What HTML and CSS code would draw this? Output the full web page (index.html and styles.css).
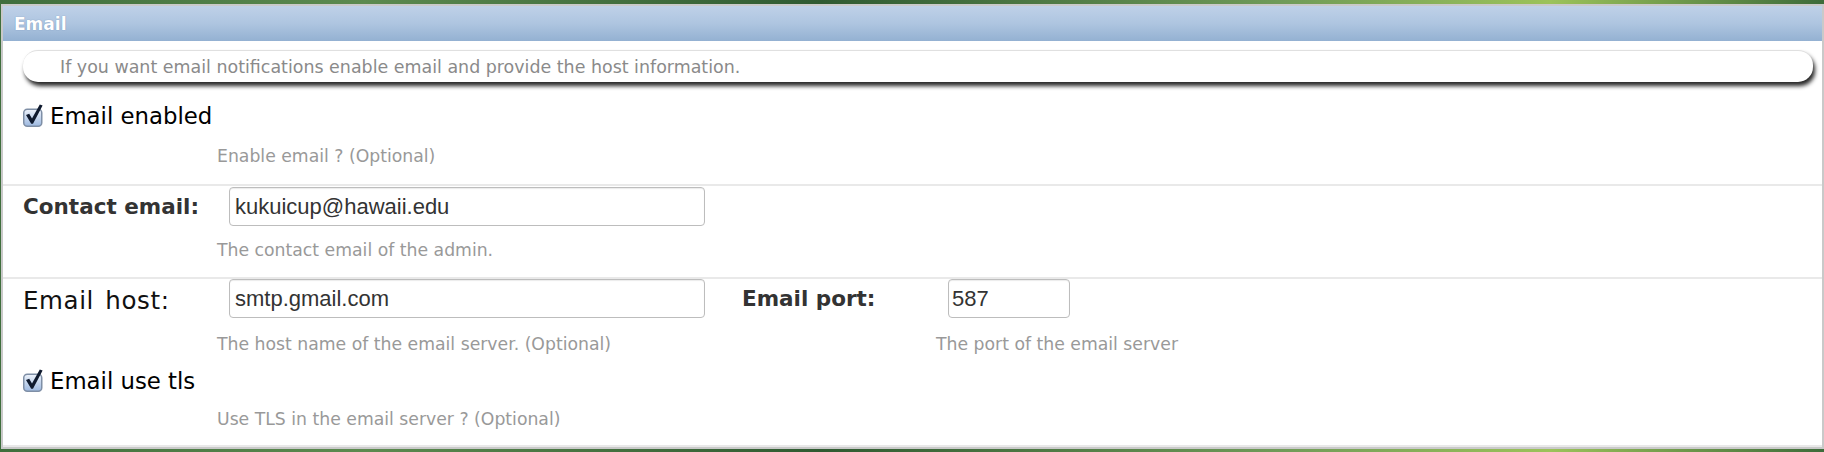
FILE: index.html
```html
<!DOCTYPE html>
<html>
<head>
<meta charset="utf-8">
<title>Email settings</title>
<link rel="stylesheet" href="styles.css">
</head>
<body>
<div class="module">
  <h2 class="module-title">Email</h2>
  <div class="description">If you want email notifications enable email and provide the host information.</div>

  <div class="form-row row-enabled">
    <div class="check-line">
      <svg class="checkbox" viewBox="0 0 20 23" width="20" height="23">
        <defs><linearGradient id="cbg1" x1="0" y1="0" x2="0" y2="1"><stop offset="0" stop-color="#eef3fb"/><stop offset="1" stop-color="#9cb8e0"/></linearGradient></defs>
        <rect x="0.75" y="5.25" width="18" height="17" rx="3.5" fill="url(#cbg1)" stroke="#7f8fa6" stroke-width="1.5"/>
        <path d="M3 11 L6.2 9.8 L9 14.6 L16.8 0.6 L19.6 1.6 L10 19.8 L8.2 19.8 Z" fill="#0f1a2e"/>
      </svg>
      <label class="check-label">Email enabled</label>
    </div>
    <p class="help">Enable email ? (Optional)</p>
  </div>

  <div class="form-row row-contact">
    <div class="field-line">
      <label class="field-label bold">Contact email:</label>
      <input class="text-input wide" type="text" value="kukuicup@hawaii.edu">
    </div>
    <p class="help">The contact email of the admin.</p>
  </div>

  <div class="form-row row-host">
    <div class="field-boxes">
      <div class="field-box host-box">
        <div class="field-line">
          <label class="field-label plain">Email host:</label>
          <input class="text-input wide" type="text" value="smtp.gmail.com">
        </div>
        <p class="help">The host name of the email server. (Optional)</p>
      </div>
      <div class="field-box port-box">
        <div class="field-line">
          <label class="field-label bold">Email port:</label>
          <input class="text-input short" type="text" value="587">
        </div>
        <p class="help">The port of the email server</p>
      </div>
    </div>
    <div class="check-line tls-line">
      <svg class="checkbox" viewBox="0 0 20 23" width="20" height="23">
        <defs><linearGradient id="cbg2" x1="0" y1="0" x2="0" y2="1"><stop offset="0" stop-color="#eef3fb"/><stop offset="1" stop-color="#9cb8e0"/></linearGradient></defs>
        <rect x="0.75" y="5.25" width="18" height="17" rx="3.5" fill="url(#cbg2)" stroke="#7f8fa6" stroke-width="1.5"/>
        <path d="M3 11 L6.2 9.8 L9 14.6 L16.8 0.6 L19.6 1.6 L10 19.8 L8.2 19.8 Z" fill="#0f1a2e"/>
      </svg>
      <label class="check-label">Email use tls</label>
    </div>
    <p class="help">Use TLS in the email server ? (Optional)</p>
  </div>
</div>
</body>
</html>
```

FILE: styles.css
```css
html, body {
  margin: 0;
  padding: 0;
}
body {
  width: 1824px;
  height: 452px;
  overflow: hidden;
  padding-top: 4px;
  box-sizing: border-box;
  background: linear-gradient(90deg, #3f6e3c 0%, #5c8a4f 20%, #2f5a31 45%, #6f9a58 70%, #9cc25a 85%, #3d6b3a 100%);
  font-family: "DejaVu Sans", sans-serif;
}
.module {
  margin-left: 1px;
  width: 1823px;
  box-sizing: border-box;
  background: #fff;
  border: 2px solid #c9c9c9;
}
.module-title {
  margin: 0;
  height: 35px;
  box-sizing: border-box;
  padding: 0 0 0 11px;
  display: flex;
  align-items: center;
  font-family: "DejaVu Sans", sans-serif;
  font-weight: bold;
  font-size: 17px;
  color: #fff;
  text-shadow: 0 0 1px rgba(60, 90, 140, 0.6);
  background: linear-gradient(180deg, #bfd1e8 0%, #aec5e0 50%, #94b1d2 100%);
}
.description {
  margin: 9px 9px 0 20px;
  height: 32px;
  box-sizing: border-box;
  border-radius: 15px;
  background: #fff;
  border-top: 1px solid #e0e0e0;
  box-shadow: 2px 4px 4px rgba(0, 0, 0, 0.85);
  padding-left: 37px;
  display: flex;
  align-items: center;
  font-size: 17.45px;
  color: #8a8a8a;
}
.form-row {
  padding-left: 20px;
  border-bottom: 2px solid #e9e9e9;
}
.row-enabled {
  padding-top: 22px;
  padding-bottom: 18px;
}
.row-contact {
  padding-top: 1px;
  padding-bottom: 17px;
}
.row-host {
  padding-top: 0;
  padding-bottom: 16px;
}
.check-line {
  display: flex;
  align-items: flex-end;
  height: 24px;
}
.checkbox {
  display: block;
  margin-bottom: 1px;
  flex: none;
}
.check-label {
  margin-left: 7px;
  font-size: 22.8px;
  line-height: 24px;
  color: #000;
}
.help {
  margin: 18px 0 0 194px;
  font-size: 17.25px;
  line-height: 20px;
  color: #999;
}
.row-contact .help {
  margin-top: 14px;
}
.field-box .help {
  margin-top: 16px;
}
.row-host .tls-line {
  margin-top: 15px;
}
.row-host > .help {
  margin-top: 16px;
}
.field-boxes {
  display: flex;
}
.host-box {
  width: 719px;
}
.field-line {
  display: flex;
  align-items: center;
  height: 39px;
}
.field-label {
  width: 206px;
  flex: none;
  font-size: 21.5px;
  color: #222;
}
.field-label.plain {
  font-size: 24.5px;
  letter-spacing: 0.6px;
  word-spacing: 3px;
  padding-top: 3px;
  color: #111;
}
.field-label.bold {
  font-weight: bold;
  color: #333;
}
.text-input {
  height: 39px;
  box-sizing: border-box;
  border: 1.5px solid #bdbdbd;
  border-radius: 4px;
  box-shadow: inset 0 1px 1px rgba(0, 0, 0, 0.08);
  padding: 0 2px 0 5px;
  font-family: "Liberation Sans", Arial, sans-serif;
  font-size: 22px;
  color: #333;
  background: #fff;
  outline: none;
}
.text-input.short {
  padding-left: 3px;
}
.text-input.wide {
  width: 476px;
}
.text-input.short {
  width: 122px;
}
```
